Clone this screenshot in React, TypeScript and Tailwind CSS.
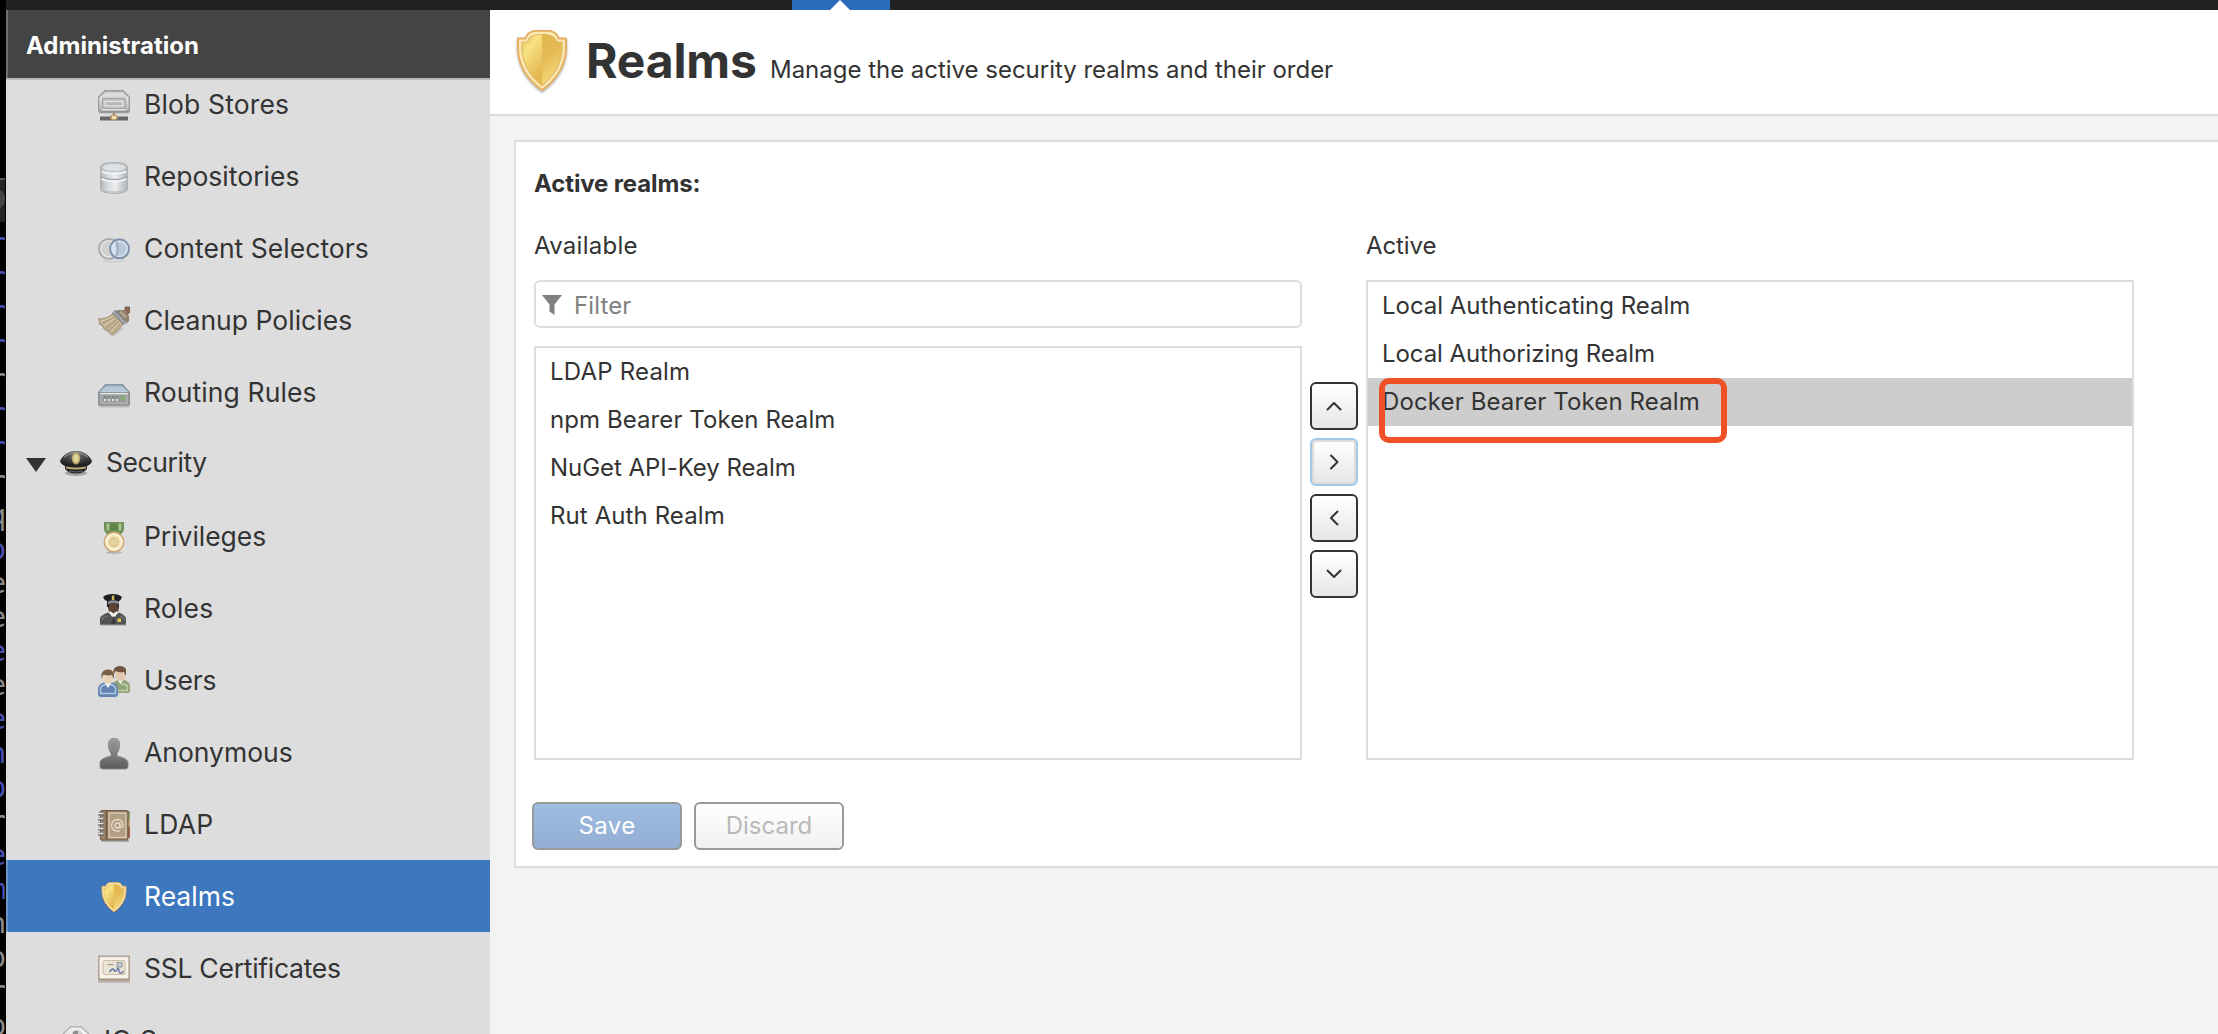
import type { ReactNode } from 'react';

/* ---------- icons ---------- */

function Svg({ children, className = 'h-8 w-8' }: { children: ReactNode; className?: string }) {
  return (
    <svg viewBox="0 0 32 32" className={`${className} shrink-0`} fill="none" aria-hidden="true">
      {children}
    </svg>
  );
}

const BlobIcon = () => (
  <Svg>
    <defs>
      <linearGradient id="blob" x1="0" y1="0" x2="0" y2="1">
        <stop offset="0" stopColor="#b4b4b4" />
        <stop offset="0.35" stopColor="#e4e4e4" />
        <stop offset="0.8" stopColor="#c2c2c2" />
        <stop offset="1" stopColor="#858585" />
      </linearGradient>
    </defs>
    <rect x="2" y="26" width="28" height="5" fill="#a5a5a5" />
    <rect x="2" y="27" width="28" height="3" fill="#666" />
    <path d="M15 22h2v4h-2z" fill="#6a5a48" />
    <path d="M7 .7h18L31.3 7v13.5q0 2-2 2H2.700q-2 0-2-2V7z" fill="url(#blob)" stroke="#9b9b9b" strokeWidth="1.300" />
    <path d="M7.500 2.500h17L28 6H4z" fill="#dcdcdc" />
    <rect x="4.500" y="8.500" width="23" height="10" rx="1" fill="#c9c9c9" stroke="#a3a3a3" strokeWidth="1.300" />
    <path d="M3.500 19.800h25" stroke="#f1f1f1" strokeWidth="1.200" />
    <rect x="7.500" y="11.800" width="17" height="4" fill="#b6b6b6" stroke="#e6e6e6" />
    <path d="M16 23.500l4 2.500v3l-4 2-4-2v-3z" fill="#b99b6d" />
    <path d="M14 26h4v3h-4z" fill="#f5dfb4" />
  </Svg>
);

const DatabaseIcon = () => (
  <Svg>
    <defs>
      <linearGradient id="db" x1="0" y1="0" x2="1" y2="0">
        <stop offset="0" stopColor="#b4b7ba" />
        <stop offset="0.25" stopColor="#d5d8da" />
        <stop offset="0.55" stopColor="#eceeef" />
        <stop offset="1" stopColor="#b0b3b7" />
      </linearGradient>
    </defs>
    <path d="M2.600 5Q3 .7 16 .7T29.400 5v22q-.4 4.300-13.400 4.300T2.600 27z" fill="url(#db)" stroke="#afb2b5" strokeWidth="1.200" />
    <ellipse cx="16" cy="5.500" rx="12" ry="4" fill="#dfe2e5" stroke="#bcc0c3" />
    <path d="M3.500 9.500Q9 12 16 12t12.500-2.500" stroke="#f3f4f5" strokeWidth="1.500" />
    <path d="M2.500 14.500Q6 17.500 16 17.500t13.500-3" stroke="#9fa3a7" strokeWidth="1.600" />
    <path d="M3.500 16.700Q8 19.300 16 19.300t12.500-2.600" stroke="#f4f5f6" strokeWidth="1.700" />
    <path d="M4 28q4 2 12 2t12-2" stroke="#b9bcbf" />
  </Svg>
);

const SelectorsIcon = () => (
  <Svg>
    <path d="M5 26.500q11 2.500 22 0" stroke="#cfcfcf" strokeWidth="1.500" />
    <circle cx="11" cy="14.800" r="10" fill="#d0d0d0" stroke="#acacac" strokeWidth="1.800" />
    <circle cx="11" cy="14.800" r="8" stroke="#e6e6e6" strokeWidth="1.300" />
    <circle cx="21.500" cy="14.800" r="9.500" fill="#b9cad8" stroke="#7f93ab" strokeWidth="1.900" />
    <circle cx="21.500" cy="14.800" r="7.500" stroke="#d9e5ee" strokeWidth="1.300" />
    <path d="M18.500 7.600q3 7.200 0 14.400" stroke="#90a2b5" strokeWidth="1.300" />
    <path d="M16.500 8.800q-3 6 0 12 2-6 0-12" fill="#e0e9f0" />
  </Svg>
);

const BroomIcon = () => (
  <Svg>
    <path d="M3 20q11 11 13 11l11-10-8 2z" fill="#b5b5b5" opacity=".6" />
    <path d="M25 6l2-2V1h5v5l-4 4z" fill="#8b6a57" stroke="#735544" strokeWidth=".8" />
    <path d="M20 4h6l5 6v5l-3 3L16 6z" fill="#8f8270" />
    <path d="M22 5.500l6 6" stroke="#b9a88f" strokeWidth="2" />
    <path d="M15 7.500Q9 13.500 0 13l2 3-1 2 4 2 1 3 4 2 4 4 5-4q5-4 7-10z" fill="#c3b291" stroke="#9a8a6e" strokeWidth=".9" />
    <path d="M15 12L4 17m14-3L8 22m12-6l-9 9m11-7l-7 9" stroke="#a99575" strokeWidth=".9" />
    <path d="M14 11L3 15.500m13-2.500L6 19.500M21 17l-8 9" stroke="#ddd0b3" strokeWidth=".9" />
    <path d="M15.500 5.500l12 12" stroke="#85878a" strokeWidth="4.600" />
    <path d="M15.500 5.500l12 12" stroke="#b3b6b9" strokeWidth="2.200" strokeDasharray="2 1" />
  </Svg>
);

const RouterIcon = () => (
  <Svg>
    <defs>
      <linearGradient id="router" x1="0" y1="0" x2="0" y2="1">
        <stop offset="0" stopColor="#8da0ae" />
        <stop offset="0.4" stopColor="#c0d2df" />
        <stop offset="1" stopColor="#a9bccb" />
      </linearGradient>
    </defs>
    <path d="M1 28.500h30" stroke="#bbb" strokeWidth="2" />
    <path d="M7.500 6.500h17L31.200 14v13H.8V14z" fill="url(#router)" stroke="#8797a3" strokeWidth="1.200" />
    <path d="M8 8.500h16l3.500 4.500H4.500z" fill="#b4cadb" />
    <rect x="1" y="14.500" width="30" height="12.500" rx="1" fill="#a9abac" stroke="#85888b" strokeWidth="1.200" />
    <path d="M2.500 15.500h27" stroke="#e9edf0" strokeWidth="1.300" />
    <rect x="4.500" y="17.300" width="23" height="6.700" fill="#969899" />
    <path d="M6 22h15" stroke="#e2e2e2" strokeWidth="2" strokeDasharray="2 2" />
    <path d="M6 19h15" stroke="#7c7c7c" strokeWidth="1.500" strokeDasharray="2 2" />
    <circle cx="25" cy="20.500" r="2" fill="#83b061" />
  </Svg>
);

const CapIcon = () => (
  <Svg>
    <defs>
      <radialGradient id="cap" cx=".5" cy=".2" r=".8">
        <stop offset="0" stopColor="#7a7a7a" />
        <stop offset="0.6" stopColor="#3c3c3c" />
        <stop offset="1" stopColor="#1b1b1b" />
      </radialGradient>
    </defs>
    <ellipse cx="16" cy="25" rx="11" ry="3" fill="#888" opacity=".7" />
    <path d="M0 12.500Q5 3 16 3t16 9.500q0 3-5 5.500H5Q0 15.500 0 12.500z" fill="url(#cap)" />
    <path d="M4 9q5-4.500 12-4.500T28 9" stroke="#9a9a9a" strokeWidth="1" />
    <path d="M5 17h22v4q-4 4.500-11 4.500T5 21z" fill="#222" />
    <path d="M6 19.500q10 2 20 0" stroke="#b9a975" strokeWidth="1.800" />
    <path d="M9 23q7 2 14 0" stroke="#5d5d5d" />
    <ellipse cx="16" cy="10.500" rx="4.200" ry="6" fill="#b9a76a" />
    <ellipse cx="16" cy="10.200" rx="2.600" ry="4" fill="#e0d5a0" />
  </Svg>
);

const MedalIcon = () => (
  <Svg>
    <path d="M6 0h20v7q0 3-3 5H9Q6 10 6 7z" fill="#6f8f57" />
    <path d="M8.500 1.500h3v7h-3zm12 0h3v7h-3z" fill="#a6c190" />
    <path d="M12 2h8v6h-8z" fill="#5f8247" />
    <ellipse cx="16" cy="30.500" rx="8" ry="1.500" fill="#b5b5b5" />
    <circle cx="16" cy="20" r="9.700" fill="#f1e3b4" stroke="#cfa877" strokeWidth="1.600" />
    <circle cx="16" cy="20" r="7.800" stroke="#fbf6df" strokeWidth="1.500" />
    <circle cx="16" cy="20" r="4.500" fill="#e3d09c" stroke="#d9bf88" />
  </Svg>
);

const OfficerIcon = () => (
  <Svg>
    <path d="M10 8h11v6q-1 6-5.500 6T10 14z" fill="#5d4335" />
    <path d="M12 15h7v6h-7z" fill="#6f5140" />
    <path d="M5 3Q8 0 14.500 0T24 3q-1 3-3 4v6H9V7Q6 6 5 3z" fill="#1d1e20" />
    <path d="M10 7.500q5.500-2.500 11 0v2.800q-5.500-2-11 0z" fill="#858b92" />
    <path d="M11 10.500q4.500-1.500 9 0V15q-1 4-4.500 4T11 15z" fill="#5d4335" />
    <path d="M13.800 1.500h2.500v4.500h-2.500z" fill="#d3bb55" />
    <path d="M2 31v-7q1-3 8-5.500l5.500 4 5.500-4q6 2.500 7 5.500v7z" fill="#515355" />
    <path d="M4 26q1-3 6-4m17 4q-1-3-5-4" stroke="#77797c" strokeWidth="1.200" />
    <path d="M11 18.500l4.500 6.500 4.500-6.500-1.500-1.200-3 2.200-3-2.200z" fill="#f0f0f0" />
    <path d="M14.500 22.500h2l1 8h-4z" fill="#3a3c3e" />
    <path d="M19.500 24.500h3.500v3.500h-3.500z" fill="#e0c550" />
    <path d="M2 31h26" stroke="#9b9b9b" />
  </Svg>
);

const UsersIcon = () => (
  <Svg>
    <path d="M14 26v-6q1-5 7-6.500h4q6 1.500 7 6v6q-1 1.500-3 1.500H17z" fill="#8fa278" />
    <path d="M23 18q5 0 6.500 2.500v4H20" stroke="#c0d1ab" strokeWidth="1.500" />
    <path d="M19.500 14l3 4 3-4z" fill="#f3f3ec" />
    <rect x="17.500" y="3" width="10" height="12" rx="5" fill="#e0c9ae" />
    <path d="M15.500 8.500V4Q17 0 22 0t6 3.500V10l-2-4q-5 1-8.500-1z" fill="#715540" />
    <path d="M0 29v-7q1-4.500 7-6h6q6 1.500 7 6v7q-1 2-3 2H3q-2 0-3-2z" fill="#6284b3" />
    <path d="M2.500 27.500V22q1.500-3 5-3.500h5q3.500.5 5 3.500v5.500z" stroke="#b3c9e5" strokeWidth="1.500" />
    <path d="M6 16l4 6 4-6z" fill="#f6f8fb" />
    <rect x="5" y="6" width="10" height="12" rx="5" fill="#e8d3b9" />
    <path d="M3.500 13V8Q5 3.500 10 3.500T16 8v5l-2-4q-4 1-8.500-.5z" fill="#7b5f49" />
  </Svg>
);

const AnonymousIcon = () => (
  <Svg>
    <defs>
      <linearGradient id="anon" x1="0" y1="0" x2="0" y2="1">
        <stop offset="0" stopColor="#a0a0a0" />
        <stop offset="1" stopColor="#5c5c5c" />
      </linearGradient>
    </defs>
    <path
      d="M16 .3q6 0 5.600 7-.4 6-2.600 8.200V18q10 2 11 6v5.500q-1 1.500-3 1.500H5q-2 0-3-1.500V24q1-4 11-6v-2.500Q10.800 13.300 10.400 7.300 10 .3 16 .3z"
      fill="url(#anon)"
      stroke="#868686"
      strokeWidth=".8"
    />
    <path d="M13.500 5q0-2 2.500-2t2.500 2v5q-1 3-2.500 3t-2.500-3z" fill="#8b8b8b" opacity=".6" />
  </Svg>
);

const AddressBookIcon = () => (
  <Svg>
    <path d="M3 31h28" stroke="#aaa" strokeWidth="2" />
    <path d="M28 1h4v8h-4z" fill="#8ba173" />
    <path d="M28 9h4v8h-4z" fill="#ccb071" />
    <path d="M28 17h4v11h-4z" fill="#a9604e" />
    <rect x="2.500" y=".6" width="27.500" height="29.400" rx="1.500" fill="#9a8269" stroke="#756048" strokeWidth="1.200" />
    <path d="M8.500 1v28.500" stroke="#6e5941" strokeWidth="1.600" />
    <rect x="11" y="3" width="17" height="24.500" fill="#b39d83" stroke="#ddd0bc" strokeWidth="1.300" />
    <path d="M0 4h6M0 9h6M0 14h6M0 19h6M0 24h6" stroke="#666" strokeWidth="3" />
    <path d="M0 3.500h5.500M0 8.500h5.500M0 13.500h5.500M0 18.500h5.500M0 23.500h5.500" stroke="#e5e5e5" strokeWidth="1.400" />
    <circle cx="19.500" cy="15.500" r="2.500" stroke="#e6dccb" strokeWidth="1.300" />
    <path d="M22 12.500v4q2.500 2.500 3-1 0-6-5.500-6t-6 6q.5 6.500 8.500 5.500" stroke="#e6dccb" strokeWidth="1.300" />
  </Svg>
);

const CertificateIcon = () => (
  <Svg>
    <path d="M0 27.800h32" stroke="#b9b5b2" strokeWidth="2" />
    <rect x=".8" y="2.300" width="30.400" height="23.500" fill="#f7f3ea" stroke="#b3a394" strokeWidth="1.600" />
    <path d="M1 25.500h30" stroke="#a59587" strokeWidth="2" />
    <rect x="5" y="6.500" width="22" height="14" rx="2" fill="#ebe5d5" stroke="#cdbfa6" strokeWidth="1.200" />
    <path d="M9.500 10.500h6" stroke="#a69b8c" strokeWidth="1.300" />
    <rect x="19" y="8.500" width="5" height="4.500" fill="#c3c9cd" stroke="#90999f" />
    <path d="M11.500 18q3-4.500 4.500-2t3-.5 2 1.500 4.500.3" stroke="#6673a6" strokeWidth="1.500" />
  </Svg>
);

const IqIcon = () => (
  <Svg>
    <path d="M11 .8h10l9 8v14l-9 8H11l-9-8v-14z" fill="#ededed" stroke="#a9a9a9" strokeWidth="1.200" />
    <path d="M12 4h8l6 6v12H6V10z" fill="#d2d2d2" />
    <path d="M13 5h5v12h-5z" fill="#8d8d8d" />
    <path d="M14.500 3l-6 7M21 4l5 6" stroke="#fafafa" strokeWidth="1.500" />
  </Svg>
);

function Shield({ id, className = 'h-8 w-8' }: { id: string; className?: string }) {
  return (
    <svg viewBox="0 0 64 64" className={`${className} shrink-0`} fill="none" aria-hidden="true">
      <defs>
        <linearGradient id={`${id}-l`} x1="0" y1="0" x2=".5" y2="1">
          <stop offset="0" stopColor="#e9c05a" />
          <stop offset="0.35" stopColor="#f8e282" />
          <stop offset="1" stopColor="#e2b650" />
        </linearGradient>
        <linearGradient id={`${id}-r`} x1="0" y1="0" x2=".3" y2="1">
          <stop offset="0" stopColor="#e3b54c" />
          <stop offset="0.5" stopColor="#e5bc58" />
          <stop offset="1" stopColor="#f6dd7c" />
        </linearGradient>
        <filter id={`${id}-s`} x="-20%" y="-20%" width="140%" height="140%">
          <feDropShadow dx="0" dy="1.500" stdDeviation="1.200" floodOpacity=".4" />
        </filter>
      </defs>
      <path
        filter={`url(#${id}-s)`}
        d="M24 .8h16q7 1.600 8.500 7.700H56V20q-1.500 24-24 40Q9.500 44 8 20V8.500h7.500Q17 2.400 24 .8z"
        fill="#fae9b4"
        stroke="#e4ac5c"
        strokeWidth="1.800"
        strokeLinejoin="round"
      />
      <path d="M32 4.500h-4q-9 1-10.500 7.500H12v8q1.500 21 20 35.500z" fill={`url(#${id}-l)`} />
      <path d="M32 4.500h4q9 1 10.500 7.500H52v8Q50.500 41 32 55.500z" fill={`url(#${id}-r)`} />
      <path
        d="M28 4.500h8q9 1 10.500 7.500H52v8Q50.500 41 32 55.500 13.500 41 12 20v-8h5.500Q19 5.500 28 4.500z"
        stroke="#e2b864"
        strokeWidth="1.200"
      />
    </svg>
  );
}

/* ---------- sidebar ---------- */

type Item = { label: string; icon: ReactNode; tracking: string; selected?: boolean };

const repositoryItems: Item[] = [
  { label: 'Blob Stores', icon: <BlobIcon />, tracking: 'tracking-[0.15px]' },
  { label: 'Repositories', icon: <DatabaseIcon />, tracking: 'tracking-[0.03px]' },
  { label: 'Content Selectors', icon: <SelectorsIcon />, tracking: 'tracking-[0.03px]' },
  { label: 'Cleanup Policies', icon: <BroomIcon />, tracking: 'tracking-[0.02px]' },
  { label: 'Routing Rules', icon: <RouterIcon />, tracking: 'tracking-[0.1px]' },
];

const securityItems: Item[] = [
  { label: 'Privileges', icon: <MedalIcon />, tracking: 'tracking-[-0.05px]' },
  { label: 'Roles', icon: <OfficerIcon />, tracking: 'tracking-[0.2px]' },
  { label: 'Users', icon: <UsersIcon />, tracking: 'tracking-[-0.15px]' },
  { label: 'Anonymous', icon: <AnonymousIcon />, tracking: 'tracking-[0px]' },
  { label: 'LDAP', icon: <AddressBookIcon />, tracking: 'tracking-[0.25px]' },
  { label: 'Realms', icon: <Shield id="nav" />, tracking: 'tracking-[0px]', selected: true },
  { label: 'SSL Certificates', icon: <CertificateIcon />, tracking: 'tracking-[-0.27px]' },
];

function NavItem({ item }: { item: Item }) {
  return (
    <li
      className={`flex h-18 shrink-0 items-center gap-[14px] pt-1 pl-[92px] ${
        item.selected ? 'bg-[#3d77be] text-white shadow-[inset_2px_0_0_#6b96ca]' : ''
      }`}
    >
      {item.icon}
      <span className={`-mt-1 text-[26.5px] leading-8 whitespace-nowrap ${item.tracking}`}>{item.label}</span>
    </li>
  );
}

function Sidebar() {
  return (
    <aside className="flex w-[484px] shrink-0 flex-col overflow-hidden bg-[#ddd]">
      <div className="h-[70px] shrink-0 border-b-2 border-[#b7b7b7] bg-[#444] pt-[21px] pl-5 text-2xl leading-[29px] font-bold tracking-[0px] text-white shadow-[inset_2px_0_0_#6e6e6e]">
        Administration
      </div>
      <nav className="min-h-0 flex-1 overflow-hidden">
        <ul className="-mt-3 flex flex-col">
          {repositoryItems.map((item) => (
            <NavItem key={item.label} item={item} />
          ))}
          <li className="flex h-18 shrink-0 items-center pl-5">
            <svg viewBox="0 0 20 14" className="mt-px mr-[14px] h-[14px] w-5" aria-hidden="true">
              <path d="M0 0h20L10 14z" fill="#333" />
            </svg>
            <CapIcon />
            <span className="-mt-1 ml-[14px] text-[26.5px] leading-8 tracking-[-0.44px]">Security</span>
          </li>
          {securityItems.map((item) => (
            <NavItem key={item.label} item={item} />
          ))}
          <li className="flex h-18 shrink-0 items-center pt-1 pl-[54px]">
            <IqIcon />
            <span className="-mt-1 ml-[12px] text-[26.5px] leading-8 tracking-[0.4px]">IQ Server</span>
          </li>
        </ul>
      </nav>
    </aside>
  );
}

/* ---------- terminal window showing behind the browser ---------- */

const sliver: [string, boolean][] = [
  ['r', true], ['r', true], ['r', true], ['r', true], ['r', false], ['r', true], ['r', true], ['r', false],
  ['q', false], ['o', true], ['e', false], ['e', false], ['e', true], ['e', false], ['e', true], ['n', true],
  ['p', true], ['r', false], ['e', true], ['m', true], ['n', false], ['o', false], ['r', false], ['p', false],
];

function TerminalSliver() {
  return (
    <div className="w-[6px] shrink-0 overflow-hidden bg-black pr-px">
      <div className="mt-[178px] h-11 overflow-hidden border-t-2 border-[#555] bg-[#242424] pt-2">
        <div className="-ml-[17px] h-[22px] w-[22px] rounded-full bg-[#444]" />
      </div>
      <div className="mt-[5px] flex w-[5px] flex-col items-end overflow-hidden font-['DejaVu_Sans_Mono',monospace] text-[28px] leading-[34px]">
        {sliver.map(([ch, blue], i) => (
          <span key={i} className={`-mr-px h-[34px] ${blue ? 'text-[#4a50b4]' : 'text-[#8c8c8c]'}`}>
            {ch}
          </span>
        ))}
      </div>
    </div>
  );
}

/* ---------- main content ---------- */

function MoveButton({ d, focused }: { d: string; focused?: boolean }) {
  return (
    <button
      className={`flex h-12 w-12 items-center justify-center rounded-md border-2 bg-linear-to-b from-white to-[#e6e6e6] ${
        focused ? 'border-[#a2c8ea] shadow-[inset_0_0_0_2px_#dcdcdc]' : 'border-[#333]'
      }`}
    >
      <svg viewBox="0 0 16 16" className="h-4 w-4" fill="none" aria-hidden="true">
        <path d={d} stroke="#333" strokeWidth="2" strokeLinecap="round" strokeLinejoin="round" />
      </svg>
    </button>
  );
}

function RealmRow({ label, tracking, selected }: { label: string; tracking: string; selected?: boolean }) {
  return (
    <li
      className={`relative h-12 pl-[14px] text-2xl leading-[47px] whitespace-nowrap ${tracking} ${
        selected ? 'bg-[#cdcdcd]' : ''
      }`}
    >
      {label}
      {selected && (
        <span className="absolute top-0 left-[11px] h-[65px] w-[348px] rounded-[10px] border-[6px] border-[#f05025]" />
      )}
    </li>
  );
}

function RealmsPanel() {
  return (
    <section className="mt-6 ml-6 h-[728px] border-2 border-r-0 border-[#ddd] bg-white">
      <h2 className="mt-[25px] ml-[18px] text-2xl leading-[33px] font-bold tracking-[-0.13px]">Active realms:</h2>
      <div className="mt-7 ml-[18px] flex">
        <div className="w-[768px]">
          <div className="h-[38px] text-2xl leading-[35px] tracking-[0.26px]">Available</div>
          <div className="mt-[14px] flex h-12 items-center rounded-md border-2 border-[#ddd] pl-[6px]">
            <svg viewBox="0 0 20 20" className="mt-[2px] h-5 w-5" aria-hidden="true">
              <path d="M0 0h20l-7.500 9.500V20l-5-3.500v-7z" fill="#808080" />
            </svg>
            <span className="mt-[3px] ml-3 text-2xl leading-[29px] tracking-[0.1px] text-[#808080]">Filter</span>
          </div>
          <ul className="mt-[18px] h-[414px] border-2 border-[#ddd]">
            <RealmRow label="LDAP Realm" tracking="tracking-[0.2px]" />
            <RealmRow label="npm Bearer Token Realm" tracking="tracking-[0.08px]" />
            <RealmRow label="NuGet API-Key Realm" tracking="tracking-[-0.05px]" />
            <RealmRow label="Rut Auth Realm" tracking="tracking-[0.1px]" />
          </ul>
        </div>
        <div className="mx-2 mt-[154px] flex flex-col gap-2">
          <MoveButton d="M1.500 11.500L8 5l6.500 6.500" />
          <MoveButton d="M5 1.500L11.500 8 5 14.500" focused />
          <MoveButton d="M11.500 1.500L5 8l6.500 6.500" />
          <MoveButton d="M1.500 4.500L8 11l6.500-6.500" />
        </div>
        <div className="w-[768px]">
          <div className="h-[38px] text-2xl leading-[35px] tracking-[-0.09px]">Active</div>
          <ul className="mt-[14px] h-[480px] border-2 border-[#ddd]">
            <RealmRow label="Local Authenticating Realm" tracking="tracking-[-0.03px]" />
            <RealmRow label="Local Authorizing Realm" tracking="tracking-[-0.08px]" />
            <RealmRow label="Docker Bearer Token Realm" tracking="tracking-[0.12px]" selected />
          </ul>
        </div>
      </div>
      <div className="mt-[42px] ml-4 flex gap-3 text-center text-2xl leading-[43px]">
        <button className="h-12 w-[150px] rounded-md border-2 border-[#999] bg-linear-to-b from-[#9dbde1] to-[#93aed3] pb-px tracking-[0.42px] text-white">
          Save
        </button>
        <button className="h-12 w-[150px] rounded-md border-2 border-[#999] bg-linear-to-b from-white to-[#f1f1f1] pb-px text-[#b9b9b9]">
          Discard
        </button>
      </div>
    </section>
  );
}

export default function App() {
  return (
    <div className="flex h-[1034px] w-[2218px] overflow-hidden bg-black font-['Inter',sans-serif] text-[#333]">
      <TerminalSliver />
      <div className="flex min-w-0 flex-1 flex-col">
        <div className="h-[10px] shrink-0 bg-[#222] pl-[786px]">
          <div className="flex h-full w-[98px] justify-center bg-[#2b6cbb]">
            <svg viewBox="0 0 20 10" className="mr-[2px] h-[10px] w-5" aria-hidden="true">
              <path d="M10 0l10 10H0z" fill="#fff" />
            </svg>
          </div>
        </div>
        <div className="flex min-h-0 flex-1">
          <Sidebar />
          <main className="min-w-0 flex-1 overflow-hidden bg-[#f3f3f3]">
            <header className="flex h-[106px] items-start border-b-2 border-[#ddd] bg-white pt-5 pl-5">
              <Shield id="title" className="h-16 w-16" />
              <div className="-mt-px ml-3 flex items-baseline">
                <h1 className="w-[184px] text-5xl leading-[64px] font-bold tracking-[-0.15px]">Realms</h1>
                <p className="text-2xl tracking-[-0.02px] whitespace-nowrap">
                  Manage the active security realms and their order
                </p>
              </div>
            </header>
            <RealmsPanel />
          </main>
        </div>
      </div>
    </div>
  );
}
